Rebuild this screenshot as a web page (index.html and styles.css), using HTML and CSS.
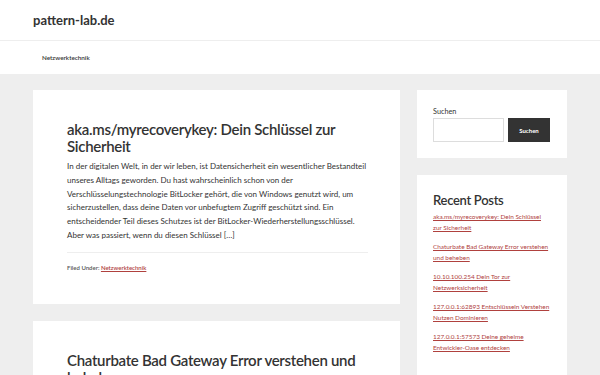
FILE: index.html
```html
<!DOCTYPE html>
<html lang="de">
<head>
    <meta charset="UTF-8">
    <meta name="viewport" content="width=device-width, initial-scale=1.0">
    <title>pattern-lab.de</title>
    <link rel="stylesheet" href="styles.css">
</head>
<body>

    <!-- Header -->
    <header class="site-header">
        <p class="site-title">pattern-lab.de</p>
    </header>

    <!-- Navigation -->
    <nav class="nav-primary">
        <a href="#" class="nav-link">Netzwerktechnik</a>
    </nav>

    <div class="site-inner">
        <main class="content">
            <article class="entry">
                <h2 class="entry-title">aka.ms/myrecoverykey: Dein Schlüssel zur Sicherheit</h2>
                <p class="entry-text">In der digitalen Welt, in der wir leben, ist Datensicherheit ein wesentlicher Bestandteil unseres Alltags geworden. Du hast wahrscheinlich schon von der Verschlüsselungstechnologie BitLocker gehört, die von Windows genutzt wird, um sicherzustellen, dass deine Daten vor unbefugtem Zugriff geschützt sind. Ein entscheidender Teil dieses Schutzes ist der BitLocker-Wiederherstellungsschlüssel. Aber was passiert, wenn du diesen Schlüssel […]</p>
                <footer class="entry-footer">Filed Under: <a href="#">Netzwerktechnik</a></footer>
            </article>

            <article class="entry">
                <h2 class="entry-title">Chaturbate Bad Gateway Error verstehen und beheben</h2>
            </article>
        </main>

        <aside class="sidebar">
            <section class="widget">
                <label class="search-label" for="searchInput">Suchen</label>
                <div class="search-form">
                    <input type="text" id="searchInput" class="search-input">
                    <button class="search-btn">Suchen</button>
                </div>
            </section>

            <section class="widget">
                <h3 class="widget-title">Recent Posts</h3>
                <ul class="recent-posts">
                    <li><a href="#">aka.ms/myrecoverykey: Dein Schlüssel <span class="nowrap">zur Sicherheit</span></a></li>
                    <li><a href="#">Chaturbate Bad Gateway Error verstehen und beheben</a></li>
                    <li><a href="#">10.10.100.254 Dein Tor zur Netzwerksicherheit</a></li>
                    <li><a href="#">127.0.0.1:62893 Entschlüsseln Verstehen Nutzen Dominieren</a></li>
                    <li><a href="#">127.0.0.1:57573 Deine geheime Entwickler-Oase entdecken</a></li>
                </ul>
            </section>
        </aside>
    </div>

</body>
</html>
```

FILE: styles.css
```css
body {
    font-family: 'Lato', 'Noto Sans', sans-serif;
    background-color: #eeeeee;
    margin: 0;
    padding: 0;
    color: #333;
}

a {
    color: #b0413e;
}

.nowrap {
    white-space: nowrap;
}

.site-header {
    background-color: #fff;
    height: 40px;
    border-bottom: 1px solid #eee;
    padding: 0 33px;
    display: flex;
    align-items: center;
}

.site-title {
    margin: 0;
    font-size: 13px;
    font-weight: bold;
    color: #333;
}

.nav-primary {
    background-color: #fff;
    height: 33px;
    padding: 0 42px;
    display: flex;
    align-items: center;
}

.nav-link {
    font-size: 6.3px;
    font-weight: 600;
    color: #333;
    text-decoration: none;
}

.site-inner {
    display: flex;
    gap: 17px;
    padding: 16px 33px;
}

.content {
    width: 367px;
}

.entry {
    background-color: #fff;
    padding: 31px 32px 33px 34px;
    margin-bottom: 17px;
}

.entry-title {
    font-size: 15px;
    font-weight: 600;
    letter-spacing: -0.3px;
    line-height: 17px;
    margin: 0 0 5px;
}

.entry-text {
    font-size: 8px;
    line-height: 13.8px;
    margin: 0;
    padding-bottom: 9px;
    border-bottom: 1px solid #eee;
}

.entry-footer {
    font-size: 6px;
    font-weight: 600;
    color: #555;
    margin-top: 11px;
}

.sidebar {
    width: 150px;
}

.widget {
    background-color: #fff;
    padding: 17px 14px 16px 16px;
    margin-bottom: 17px;
}

.search-label {
    display: block;
    font-size: 7.3px;
    margin-bottom: 2px;
}

.search-form {
    display: flex;
    gap: 4px;
}

.search-input {
    width: 71px;
    height: 24px;
    box-sizing: border-box;
    border: 1px solid #ddd;
    margin: 0;
}

.search-btn {
    width: 42px;
    height: 24px;
    background-color: #333;
    color: #fff;
    border: none;
    font-family: inherit;
    font-size: 6px;
    font-weight: bold;
    padding: 0;
}

.widget-title {
    font-size: 13px;
    font-weight: 600;
    letter-spacing: -0.3px;
    margin: 0 0 3px;
}

.recent-posts {
    list-style: none;
    margin: 0;
    padding: 0;
    max-width: 120px;
}

.recent-posts li {
    font-size: 6.4px;
    line-height: 11px;
    margin-bottom: 8px;
}
```
